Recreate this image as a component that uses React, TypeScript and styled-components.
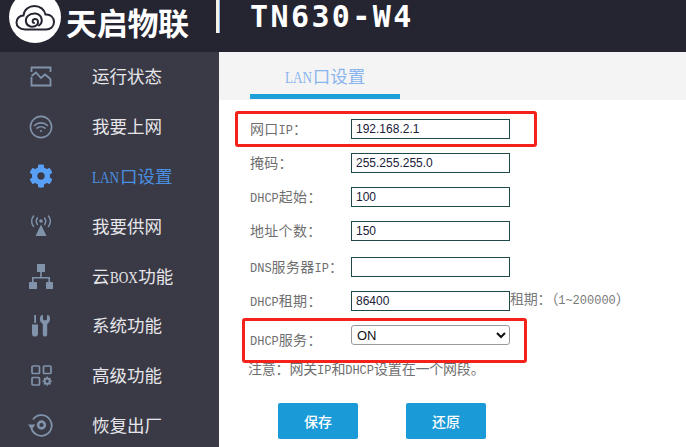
import React from 'react'
import styled, { createGlobalStyle } from 'styled-components'
import { FaCog } from 'react-icons/fa'

const GlobalStyle = createGlobalStyle`
    html, body {
        margin: 0;
        padding: 0;
        background: #fff;
    }
`

const Page = styled.div`
    position: relative;
    width: 686px;
    height: 447px;
    overflow: hidden;
    display: flex;
    flex-direction: column;
    font-family: "Liberation Serif", "Noto Sans CJK SC", serif;
`

const Header = styled.header`
    height: 52px;
    flex: none;
    display: flex;
    align-items: flex-start;
    background: #252531;
    overflow: hidden;
`

const LogoDisc = styled.div`
    width: 52px;
    height: 52px;
    flex: none;
    margin: -9px 0 0 9px;
    border-radius: 50%;
    background: #fff;
    display: flex;
    align-items: center;
    justify-content: center;
`

const Brand = styled.div`
    width: 150px;
    flex: none;
    margin: 4px 0 0 5px;
    font-family: "Noto Sans CJK SC", sans-serif;
    font-weight: 700;
    font-size: 31px;
    line-height: 36px;
    letter-spacing: -0.3px;
    color: #fff;
`

const Divider = styled.div`
    width: 3px;
    height: 33px;
    flex: none;
    background: #f4f1e6;
    box-shadow: 1px 0 0 #8fb3e0;
`

const Model = styled.div`
    margin: 0 0 0 31px;
    font-family: "DejaVu Sans Mono", monospace;
    font-weight: 700;
    font-size: 30px;
    line-height: 34px;
    letter-spacing: 2.4px;
    color: #fff;
`

const Body = styled.div`
    flex: 1;
    display: flex;
    min-height: 0;
`

const Sidebar = styled.nav`
    width: 219px;
    flex: none;
    background: #3a3a46;
    display: flex;
    flex-direction: column;
`

const MenuRow = styled.div<{ $active?: boolean }>`
    height: 49.8px;
    flex: none;
    display: flex;
    align-items: center;
    color: ${p => (p.$active ? '#4a90e2' : '#e6e6ea')};
`

const MenuIcon = styled.div<{ $active?: boolean }>`
    width: 26px;
    height: 26px;
    flex: none;
    margin: 0 38px 0 28px;
    display: flex;
    align-items: center;
    justify-content: center;
    color: ${p => (p.$active ? '#58a0f5' : '#8093aa')};
`

const MenuLabel = styled.span`
    margin-top: -2px;
    font-size: 17.5px;
    white-space: nowrap;
`

// the original's latin letters are tall and narrow, so squeeze them sideways
const MenuLatin = styled.span`
    display: inline-block;
    margin-right: -6px;
    font-size: 16.5px;
    transform: scaleX(0.8);
    transform-origin: left center;
`

const Main = styled.main`
    flex: 1;
    min-width: 0;
    display: flex;
    flex-direction: column;
`

const TabBar = styled.div`
    height: 48px;
    flex: none;
    padding-left: 31px;
    background: #f4f4f4;
`

const Tab = styled.div`
    width: 150px;
    height: 47px;
    box-sizing: border-box;
    border-bottom: 5px solid #1f9fd8;
    padding-top: 14px;
    text-align: center;
    font-size: 17.5px;
    line-height: 22px;
    color: #8ab4ee;
`

const Form = styled.form`
    padding: 12px 0 0 31px;
    display: flex;
    flex-direction: column;
`

const Row = styled.div<{ $height?: number }>`
    height: ${p => p.$height ?? 34}px;
    display: flex;
    align-items: flex-start;
`

const Label = styled.label<{ $drop?: number }>`
    width: 101px;
    flex: none;
    margin-top: ${p => p.$drop ?? 8}px;
    font-size: 14px;
    line-height: 20px;
    letter-spacing: 0.3px;
    color: #6f6f6f;
`

const Latin = styled.span`
    font-family: "Liberation Mono", monospace;
    font-size: 12px;
    letter-spacing: 0;
`

const Field = styled.input`
    width: 159px;
    height: 20px;
    margin-top: 7px;
    padding: 0 4px;
    box-sizing: border-box;
    border: 1px solid #1f4a4a;
    border-radius: 0;
    outline: none;
    background: #fff;
    font-family: "Liberation Sans", sans-serif;
    font-size: 12px;
    color: #20203a;
`

const Dropdown = styled.select`
    width: 159px;
    height: 20px;
    margin-top: 7px;
    padding: 0 0 0 1px;
    box-sizing: border-box;
    border: 1px solid #9a9a9a;
    border-radius: 3px;
    background: #fff;
    font-family: "Liberation Sans", sans-serif;
    font-size: 13px;
    color: #111;
`

const Hint = styled.span`
    margin-top: 6px;
    font-size: 14px;
    line-height: 20px;
    color: #7a7a7a;
    white-space: nowrap;
    letter-spacing: -0.2px;
`

const Note = styled.div`
    margin: 2px 0 0 -2px;
    font-size: 14px;
    line-height: 20px;
    color: #6f6f6f;
    letter-spacing: -0.2px;
    white-space: nowrap;
`

const Actions = styled.div`
    margin: 22px 0 0 28px;
    display: flex;
    gap: 48px;
`

const ActionButton = styled.button`
    width: 80px;
    height: 36px;
    border: none;
    border-radius: 2px;
    background: #1a9ad6;
    color: #fff;
    font-family: "Noto Sans CJK SC", sans-serif;
    font-size: 14px;
    font-weight: 500;
`

const Callout = styled.div<{ $left: number; $top: number; $w: number; $h: number }>`
    position: absolute;
    left: ${p => p.$left}px;
    top: ${p => p.$top}px;
    width: ${p => p.$w}px;
    height: ${p => p.$h}px;
    box-sizing: border-box;
    border: 3px solid #f5221b;
    border-radius: 3px;
    pointer-events: none;
`

const Logo = () => (
    <svg width="46" height="34" viewBox="0 0 46 34" fill="none" stroke="#252531" strokeWidth="2" strokeLinecap="round">
        <path d="M13 29.5 C7.5 29.5 4.5 26 4.5 22.5 C4.5 18.5 7.5 15.5 11.5 15.5 C12 9.5 17 6 22.5 6 C28 6 32.5 9.5 33.5 14.5 C38.5 14 42 17.5 42 22 C42 26.5 38.5 29.5 34 29.5 Z" />
        <path d="M27 25.5 C31.5 22.5 30.5 14.5 23.5 13.5 C17 13 13 17.5 14 22 C15 27 21.5 28 25 25 C27.5 22 25.5 18.5 22.5 19 C20 19.5 20 22.5 22 23" />
    </svg>
)

const ActivityIcon = () => (
    <svg width="22" height="21" viewBox="0 0 22 21" fill="none" stroke="currentColor" strokeWidth="1.8">
        <path d="M1.5 6 V1.5 H20.5 V6 M20.5 13 V19.5 H1.5 V11" />
        <path d="M1.5 10 L6 6.5 L11 12 L15 8.5 L20.5 13" />
    </svg>
)

const WifiIcon = () => (
    <svg width="24" height="24" viewBox="0 0 24 24" fill="none" stroke="currentColor" strokeWidth="1.6" strokeLinecap="round">
        <circle cx="12" cy="12" r="10.6" />
        <path d="M5.5 10.5 C9 7 15 7 18.5 10.5" />
        <path d="M8 13.2 C10.3 11.2 13.7 11.2 16 13.2" />
        <circle cx="12" cy="16" r="1" fill="currentColor" stroke="none" />
    </svg>
)

const TowerIcon = () => (
    <svg width="22" height="22" viewBox="0 0 22 22" fill="none" stroke="currentColor" strokeWidth="1.5" strokeLinecap="round">
        <circle cx="11" cy="6" r="1.8" fill="currentColor" stroke="none" />
        <path d="M7.4 3 C6 5 6 7.5 7.4 9.5 M14.6 3 C16 5 16 7.5 14.6 9.5" />
        <path d="M3.6 1 C1 4 1 8.5 3.6 11.5 M18.4 1 C21 4 21 8.5 18.4 11.5" />
        <path d="M11 9.5 L16.5 21 H5.5 Z" fill="currentColor" stroke="none" />
    </svg>
)

const NetworkIcon = () => (
    <svg width="24" height="25" viewBox="0 0 24 25" fill="currentColor">
        <rect x="8" y="0" width="8" height="8" rx="0.6" />
        <rect x="0" y="18" width="8" height="7" rx="0.6" />
        <rect x="17" y="18" width="7" height="7" rx="0.6" />
        <path d="M11.2 8 H12.8 V13 H21 V18 H19.4 V14.6 H4.6 V18 H3 V13 H11.2 Z" />
    </svg>
)

const ToolsIcon = () => (
    <svg width="20" height="22" viewBox="0 0 20 22" fill="currentColor">
        <path d="M3.2 0 H5 V8 H3.2 Z" />
        <path d="M1 9.5 H7 V19 C7 20.6 5.6 21.6 4 21.6 C2.4 21.6 1 20.6 1 19 Z" />
        <path d="M10 0.5 L12 0 V4.5 L14 5.5 L16 4.5 V0 L18 0.5 C19.4 2 19.6 6 17.4 8 L16.2 9 V19.5 C16.2 21 15.2 21.6 14 21.6 C12.8 21.6 11.8 21 11.8 19.5 V9 L10.6 8 C8.4 6 8.6 2 10 0.5 Z" />
    </svg>
)

const AppsIcon = () => (
    <svg width="21" height="21" viewBox="0 0 21 21" fill="none" stroke="currentColor" strokeWidth="1.7">
        <rect x="1" y="1" width="7.5" height="7.5" rx="1" />
        <rect x="12.5" y="1" width="7.5" height="7.5" rx="1" />
        <rect x="1" y="12.5" width="7.5" height="7.5" rx="1" />
        <circle cx="16.2" cy="16.2" r="2.6" strokeWidth="2" />
        <path d="M16.2 11.6 V13 M16.2 19.4 V20.8 M11.6 16.2 H13 M19.4 16.2 H20.8 M13 13 L14 14 M18.4 18.4 L19.4 19.4 M13 19.4 L14 18.4 M18.4 14 L19.4 13" strokeWidth="1.5" />
    </svg>
)

const RestoreIcon = () => (
    <svg width="26" height="24" viewBox="0 0 26 24" fill="none" stroke="currentColor" strokeWidth="1.8">
        <path d="M3.2 14 A10.3 10.3 0 1 0 5 6.5" />
        <path d="M0 11.5 H7.5 L3.6 16.5 Z" fill="currentColor" stroke="none" />
        <circle cx="13.5" cy="12" r="3.4" strokeWidth="2.6" />
    </svg>
)

const menu = [
    { text: <>运行状态</>, icon: <ActivityIcon /> },
    { text: <>我要上网</>, icon: <WifiIcon /> },
    { text: <><MenuLatin>LAN</MenuLatin>口设置</>, icon: <FaCog size={24} />, active: true },
    { text: <>我要供网</>, icon: <TowerIcon /> },
    { text: <>云<MenuLatin>BOX</MenuLatin>功能</>, icon: <NetworkIcon /> },
    { text: <>系统功能</>, icon: <ToolsIcon /> },
    { text: <>高级功能</>, icon: <AppsIcon /> },
    { text: <>恢复出厂</>, icon: <RestoreIcon /> },
]

const App: React.FC = () => {
    return (
        <Page>
            <GlobalStyle />
            <Header>
                <LogoDisc><Logo /></LogoDisc>
                <Brand>天启物联</Brand>
                <Divider />
                <Model>TN630-W4</Model>
            </Header>
            <Body>
                <Sidebar>
                    {menu.map((item, i) => (
                        <MenuRow key={i} $active={item.active}>
                            <MenuIcon $active={item.active}>{item.icon}</MenuIcon>
                            <MenuLabel>{item.text}</MenuLabel>
                        </MenuRow>
                    ))}
                </Sidebar>
                <Main>
                    <TabBar><Tab><MenuLatin>LAN</MenuLatin>口设置</Tab></TabBar>
                    <Form>
                        <Row>
                            <Label>网口<Latin>IP</Latin>：</Label>
                            <Field defaultValue="192.168.2.1" />
                        </Row>
                        <Row>
                            <Label>掩码：</Label>
                            <Field defaultValue="255.255.255.0" />
                        </Row>
                        <Row>
                            <Label><Latin>DHCP</Latin>起始：</Label>
                            <Field defaultValue="100" />
                        </Row>
                        <Row $height={36}>
                            <Label>地址个数：</Label>
                            <Field defaultValue="150" />
                        </Row>
                        <Row>
                            <Label><Latin>DNS</Latin>服务器<Latin>IP</Latin>：</Label>
                            <Field />
                        </Row>
                        <Row>
                            <Label><Latin>DHCP</Latin>租期：</Label>
                            <Field defaultValue="86400" />
                            <Hint>租期：（<Latin>1~200000</Latin>）</Hint>
                        </Row>
                        <Row $height={40}>
                            <Label $drop={13}><Latin>DHCP</Latin>服务：</Label>
                            <Dropdown defaultValue="ON">
                                <option>ON</option>
                                <option>OFF</option>
                            </Dropdown>
                        </Row>
                        <Note>注意：网关<Latin>IP</Latin>和<Latin>DHCP</Latin>设置在一个网段。</Note>
                        <Actions>
                            <ActionButton type="button">保存</ActionButton>
                            <ActionButton type="button">还原</ActionButton>
                        </Actions>
                    </Form>
                </Main>
            </Body>
            <Callout $left={235} $top={111} $w={302} $h={36} />
            <Callout $left={242} $top={318} $w={285} $h={45} />
        </Page>
    )
}

export default App
